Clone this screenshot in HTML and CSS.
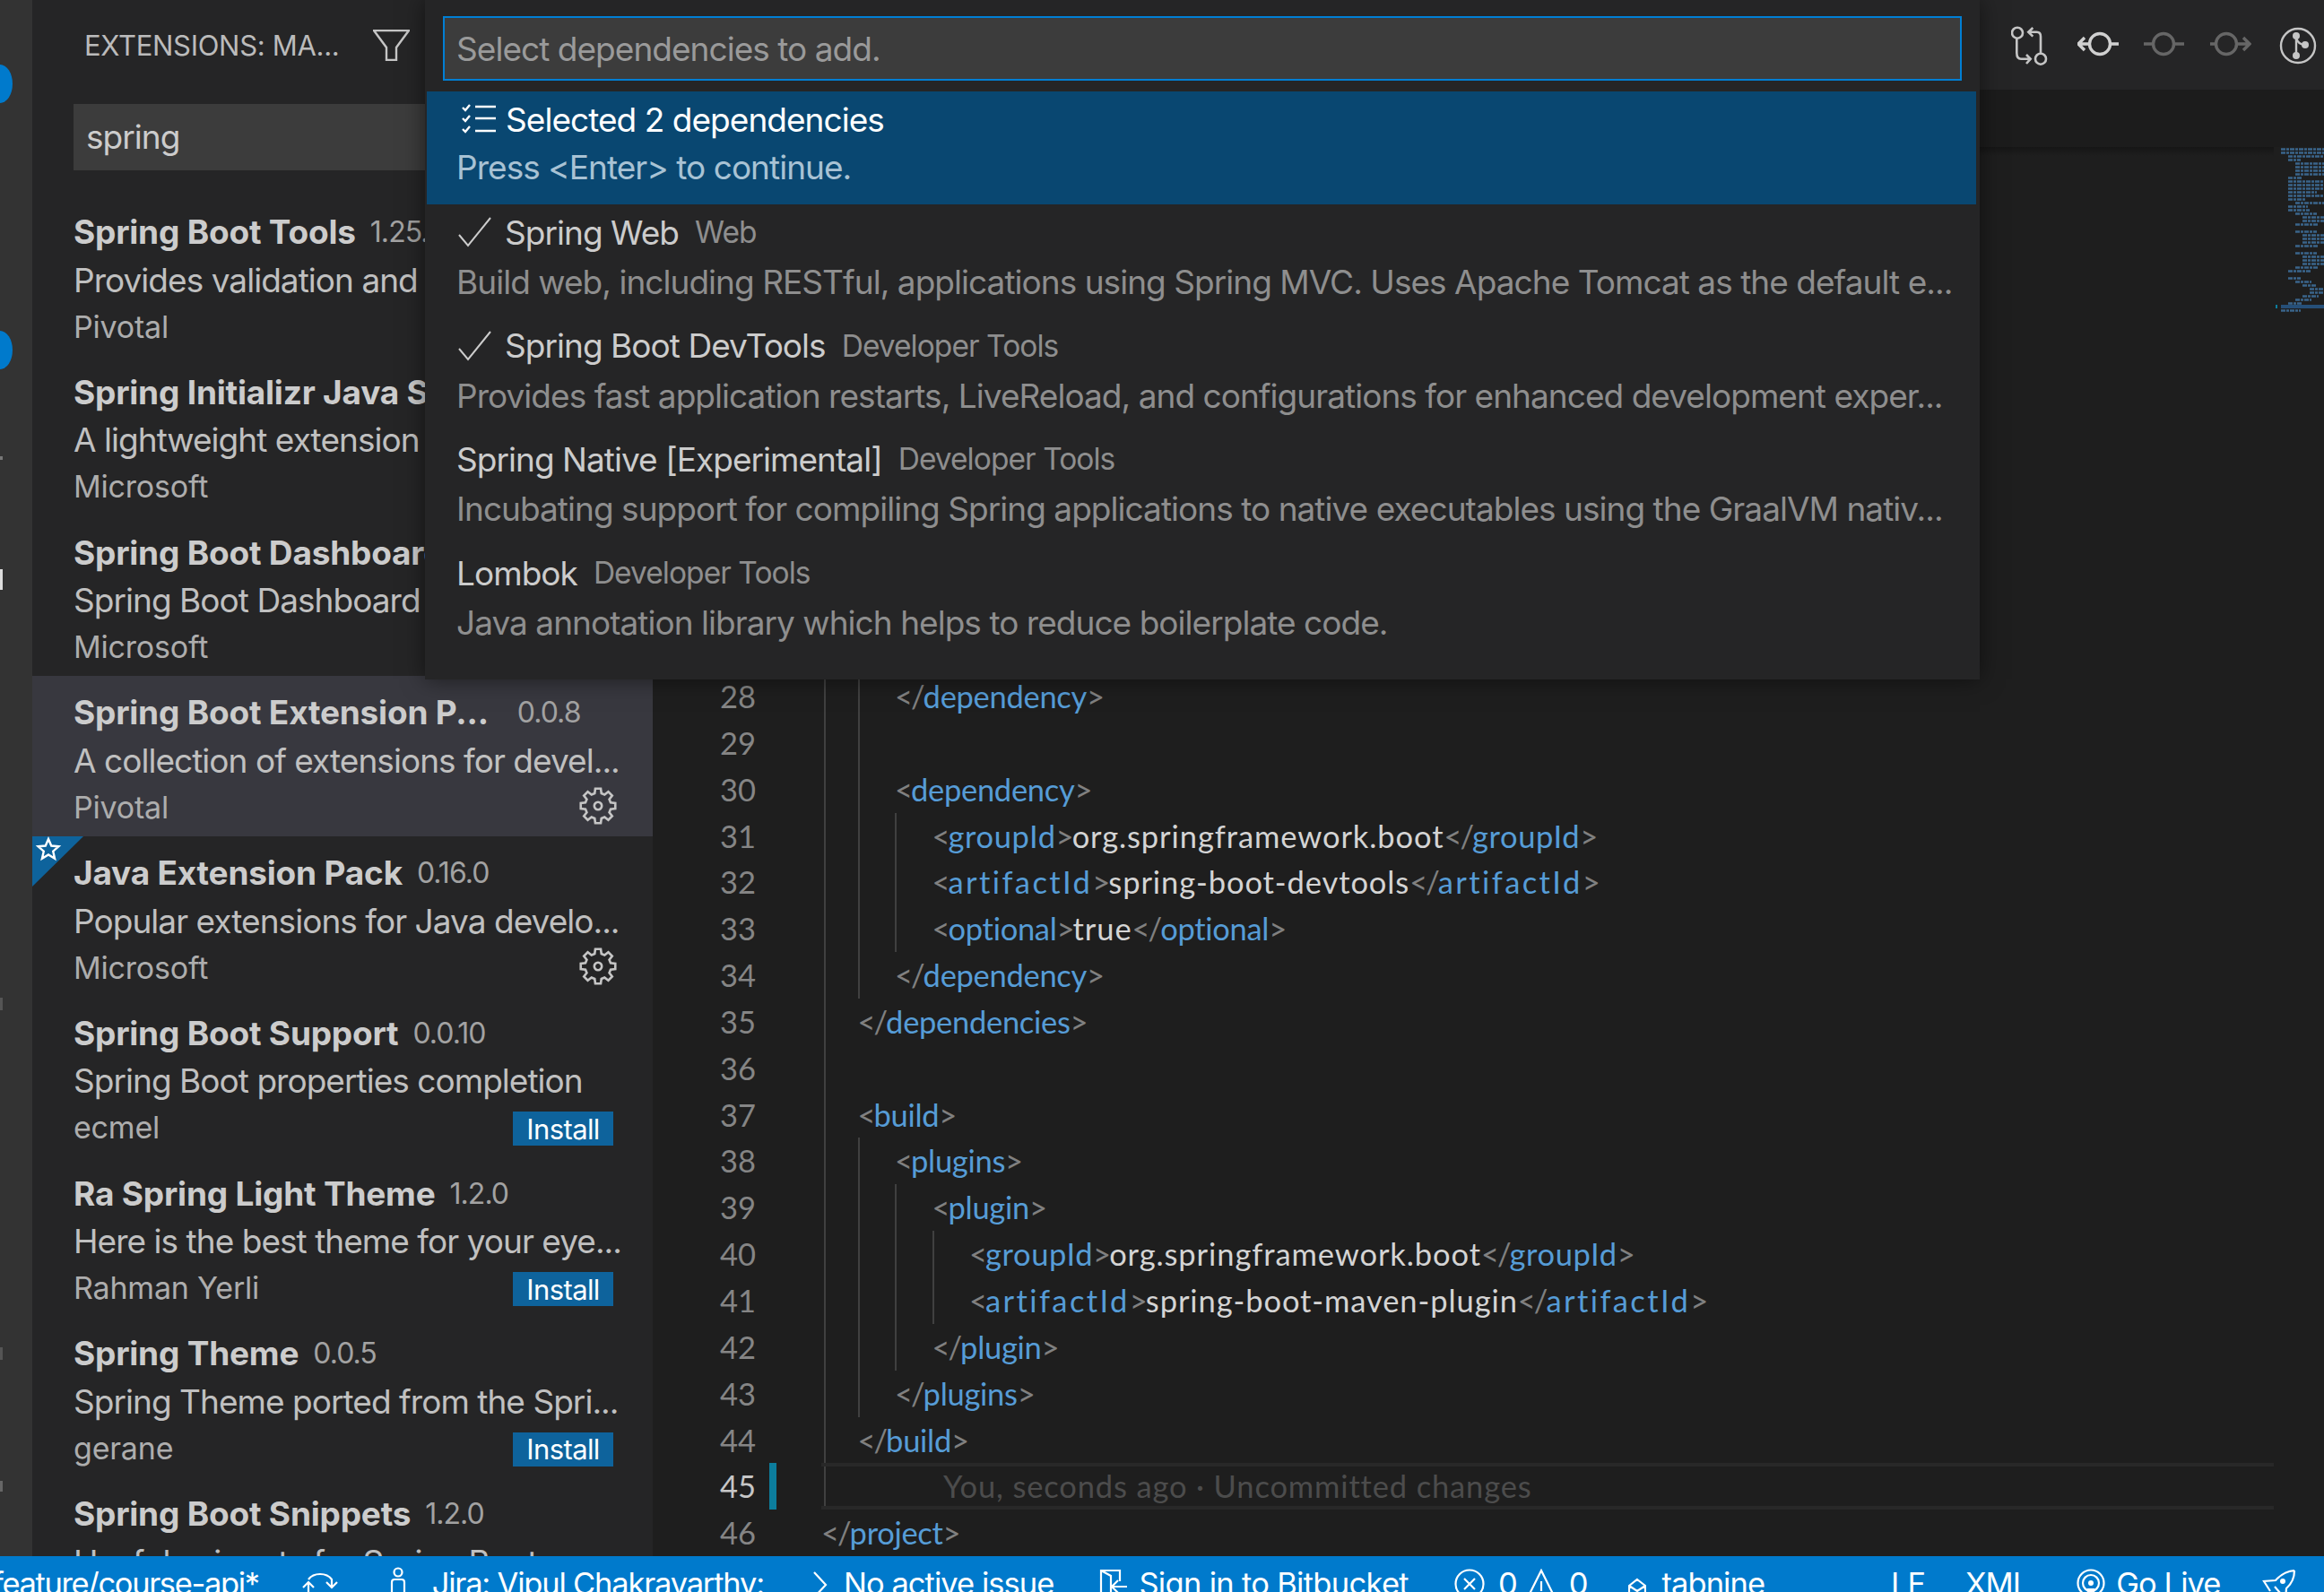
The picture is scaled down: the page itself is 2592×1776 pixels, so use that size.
FILE: index.html
```html
<!DOCTYPE html>
<html lang="en">
<head>
  <meta charset="UTF-8">
  <title>Spring Initializr - Select dependencies</title>
  <link rel="stylesheet" href="styles.css">
</head>
<body>

<svg class="defs" width="0" height="0">
  <symbol id="gear" viewBox="-21 -21 42 42">
    <polygon points="-3.75,-14.01 -3.05,-19.26 3.05,-19.26 3.75,-14.01 7.25,-12.56 11.46,-15.78 15.78,-11.46 12.56,-7.25 14.01,-3.75 19.26,-3.05 19.26,3.05 14.01,3.75 12.56,7.25 15.78,11.46 11.46,15.78 7.25,12.56 3.75,14.01 3.05,19.26 -3.05,19.26 -3.75,14.01 -7.25,12.56 -11.46,15.78 -15.78,11.46 -12.56,7.25 -14.01,3.75 -19.26,3.05 -19.26,-3.05 -14.01,-3.75 -12.56,-7.25 -15.78,-11.46 -11.46,-15.78 -7.25,-12.56" />
    <circle r="4.2" />
  </symbol>
</svg>

<div class="workbench">
  <div class="main">

    <!-- Activity bar, cropped at the left edge -->
    <div class="activity">
      <div class="badge badge-first"></div>
      <div class="badge badge-second"></div>
      <div class="mark mark-b"></div>
      <div class="mark mark-white"></div>
      <div class="mark mark-c"></div>
      <div class="mark mark-d"></div>
      <div class="mark mark-e"></div>
    </div>

    <!-- Extensions sidebar -->
    <div class="sidebar">
      <div class="sidebar-header">
        <span class="sidebar-title">EXTENSIONS: MA...</span>
        <svg class="filter-icon" viewBox="0 0 41 35"><path d="M1 1H40L26 20V34H15V20Z" /></svg>
      </div>
      <div class="search-box">spring</div>

      <div class="ext-list">
        <div class="ext">
          <div class="ext-head"><span class="ext-name">Spring Boot Tools</span><span class="ext-version">1.25.0</span></div>
          <div class="ext-desc">Provides validation and content assist</div>
          <div class="ext-foot"><span class="ext-publisher">Pivotal</span></div>
        </div>
        <div class="ext">
          <div class="ext-head"><span class="ext-name">Spring Initializr Java Support</span></div>
          <div class="ext-desc">A lightweight extension to quickly</div>
          <div class="ext-foot"><span class="ext-publisher">Microsoft</span></div>
        </div>
        <div class="ext">
          <div class="ext-head"><span class="ext-name">Spring Boot Dashboard</span></div>
          <div class="ext-desc">Spring Boot Dashboard for VS Code</div>
          <div class="ext-foot"><span class="ext-publisher">Microsoft</span></div>
        </div>
        <div class="ext ext-selected">
          <div class="ext-head"><span class="ext-name ext-cut">Spring Boot Extension P...</span><span class="ext-version">0.0.8</span></div>
          <div class="ext-desc">A collection of extensions for devel...</div>
          <div class="ext-foot">
            <span class="ext-publisher">Pivotal</span>
            <svg class="gear"><use href="#gear" /></svg>
          </div>
        </div>
        <div class="ext">
          <svg class="star-badge" viewBox="0 0 57 56">
            <polygon class="star-bg" points="0,0 57,0 0,56" />
            <polygon class="star" points="18,3 21.23,10.55 29.4,11.3 23.23,16.7 25.05,24.7 18,20.5 10.95,24.7 12.77,16.7 6.6,11.3 14.77,10.55" />
          </svg>
          <div class="ext-head"><span class="ext-name">Java Extension Pack</span><span class="ext-version">0.16.0</span></div>
          <div class="ext-desc">Popular extensions for Java develo...</div>
          <div class="ext-foot">
            <span class="ext-publisher">Microsoft</span>
            <svg class="gear"><use href="#gear" /></svg>
          </div>
        </div>
        <div class="ext">
          <div class="ext-head"><span class="ext-name">Spring Boot Support</span><span class="ext-version">0.0.10</span></div>
          <div class="ext-desc">Spring Boot properties completion</div>
          <div class="ext-foot"><span class="ext-publisher">ecmel</span><button class="install-btn">Install</button></div>
        </div>
        <div class="ext">
          <div class="ext-head"><span class="ext-name">Ra Spring Light Theme</span><span class="ext-version">1.2.0</span></div>
          <div class="ext-desc">Here is the best theme for your eye...</div>
          <div class="ext-foot"><span class="ext-publisher">Rahman Yerli</span><button class="install-btn">Install</button></div>
        </div>
        <div class="ext">
          <div class="ext-head"><span class="ext-name">Spring Theme</span><span class="ext-version">0.0.5</span></div>
          <div class="ext-desc">Spring Theme ported from the Spri...</div>
          <div class="ext-foot"><span class="ext-publisher">gerane</span><button class="install-btn">Install</button></div>
        </div>
        <div class="ext">
          <div class="ext-head"><span class="ext-name">Spring Boot Snippets</span><span class="ext-version">1.2.0</span></div>
          <div class="ext-desc">Useful snippets for Spring Boot pro...</div>
        </div>
      </div>
    </div>

    <!-- Editor -->
    <div class="editor">
      <div class="tabs">
        <svg class="action" viewBox="3 0 46 46">
          <circle cx="10" cy="9.7" r="6" /><circle cx="36" cy="38.7" r="6" />
          <path d="M9.3 16V32Q9.3 38.7 14 38.7H24M20 34l4.7 4.7L20 44M36 32V13.7Q36 8.7 31.7 8.7H22.3M27.3 4L22.3 8.7L27.3 13.7" />
        </svg>
        <svg class="action action-commit" viewBox="0 0 46 46">
          <circle cx="25" cy="22" r="11.5" />
          <path d="M36.5 22H46M13.5 22H1M8 15L1 22L8 29" />
        </svg>
        <svg class="action action-commit action-dim" viewBox="0 0 46 46">
          <circle cx="22" cy="22" r="11.5" />
          <path d="M33.5 22H45M10.5 22H0" />
        </svg>
        <svg class="action action-commit action-dim" viewBox="0 0 46 46">
          <circle cx="18" cy="22" r="11.5" />
          <path d="M29.5 22H44M6.5 22H0M37 15L44 22L37 29" />
        </svg>
        <svg class="action action-merge" viewBox="0 0 46 46">
          <circle cx="24" cy="24" r="19" />
          <circle class="dot" cx="22" cy="13" r="4" /><circle class="dot" cx="22" cy="35" r="4" /><circle class="dot" cx="32" cy="23" r="4" />
          <path d="M22 13V35M22 15Q24 23 32 23" />
        </svg>
      </div>
      <div class="breadcrumbs"></div>

      <div class="editor-body">
        <div class="gutter">
          <div>28</div><div>29</div><div>30</div><div>31</div><div>32</div><div>33</div><div>34</div>
          <div>35</div><div>36</div><div>37</div><div>38</div><div>39</div><div>40</div><div>41</div>
          <div>42</div><div>43</div><div>44</div><div class="current">45</div><div>46</div>
        </div>

        <div class="code">
          <div class="block block-root">
            <div class="block">
              <div class="line"><span class="br">&lt;/</span><span class="tag">dependency</span><span class="br">&gt;</span></div>
              <div class="line"></div>
              <div class="line"><span class="br">&lt;</span><span class="tag">dependency</span><span class="br">&gt;</span></div>
              <div class="block">
                <div class="line"><span class="br">&lt;</span><span class="tag tag-group">groupId</span><span class="br">&gt;</span>org.springframework.boot<span class="br">&lt;/</span><span class="tag tag-group">groupId</span><span class="br">&gt;</span></div>
                <div class="line"><span class="br">&lt;</span><span class="tag tag-wide">artifactId</span><span class="br">&gt;</span>spring-boot-devtools<span class="br">&lt;/</span><span class="tag tag-wide">artifactId</span><span class="br">&gt;</span></div>
                <div class="line"><span class="br">&lt;</span><span class="tag">optional</span><span class="br">&gt;</span>true<span class="br">&lt;/</span><span class="tag">optional</span><span class="br">&gt;</span></div>
              </div>
              <div class="line"><span class="br">&lt;/</span><span class="tag">dependency</span><span class="br">&gt;</span></div>
            </div>
            <div class="line"><span class="br">&lt;/</span><span class="tag">dependencies</span><span class="br">&gt;</span></div>
            <div class="line"></div>
            <div class="line"><span class="br">&lt;</span><span class="tag">build</span><span class="br">&gt;</span></div>
            <div class="block">
              <div class="line"><span class="br">&lt;</span><span class="tag">plugins</span><span class="br">&gt;</span></div>
              <div class="block">
                <div class="line"><span class="br">&lt;</span><span class="tag">plugin</span><span class="br">&gt;</span></div>
                <div class="block">
                  <div class="line"><span class="br">&lt;</span><span class="tag tag-group">groupId</span><span class="br">&gt;</span>org.springframework.boot<span class="br">&lt;/</span><span class="tag tag-group">groupId</span><span class="br">&gt;</span></div>
                  <div class="line"><span class="br">&lt;</span><span class="tag tag-wide">artifactId</span><span class="br">&gt;</span>spring-boot-maven-plugin<span class="br">&lt;/</span><span class="tag tag-wide">artifactId</span><span class="br">&gt;</span></div>
                </div>
                <div class="line"><span class="br">&lt;/</span><span class="tag">plugin</span><span class="br">&gt;</span></div>
              </div>
              <div class="line"><span class="br">&lt;/</span><span class="tag">plugins</span><span class="br">&gt;</span></div>
            </div>
            <div class="line"><span class="br">&lt;/</span><span class="tag">build</span><span class="br">&gt;</span></div>
            <div class="line line-current"><span class="blame">You, seconds ago · Uncommitted changes</span></div>
          </div>
          <div class="line"><span class="br">&lt;/</span><span class="tag">project</span><span class="br">&gt;</span></div>
        </div>

        <svg class="minimap" viewBox="0 0 56 190" width="56" height="190">
          <rect class="mini-current" x="8" y="176" width="48" height="4" />
          <rect class="mini-change" x="2" y="176" width="2" height="4" />
          <path class="mini-tags" d="M8 2.5h48M8 6.5h48M16 10.5h40M16 14.5h14M24 18.5h32M24 22.5h32M24 26.5h32M24 30.5h32M16 34.5h16M16 38.5h40M16 42.5h40M16 46.5h40M16 50.5h32M16 54.5h40M16 58.5h20M24 62.5h32M16 66.5h22M16 70.5h24M24 74.5h24M32 78.5h24M32 82.5h24M24 86.5h26M24 94.5h24M32 98.5h24M32 102.5h24M32 106.5h24M24 110.5h26M24 118.5h24M32 122.5h24M32 126.5h24M32 130.5h24M24 134.5h26M16 138.5h26M16 146.5h14M24 150.5h18M32 154.5h16M40 158.5h16M40 162.5h16M32 166.5h18M24 170.5h18M16 174.5h16M8 182.5h22" />
        </svg>
      </div>
    </div>
  </div>

  <!-- Status bar, cropped at the bottom -->
  <div class="statusbar">
    <span class="status-item status-branch">feature/course-api*</span>
    <svg class="status-icon status-sync" viewBox="0 0 40 34">
      <path d="M7 12A15 12 0 0 1 33 12V20M27 15L33 21L39 15M1 21L7 15L13 21M7 15V34M33 30V34" />
    </svg>
    <svg class="status-icon status-person" viewBox="0 0 18 34">
      <circle cx="9" cy="6" r="4.5" /><path d="M2 34V17Q2 14 5 14H13Q16 14 16 17V34" />
    </svg>
    <span class="status-item status-jira">Jira: Vipul Chakravarthy:</span>
    <svg class="status-icon status-chevron" viewBox="0 0 18 34"><path d="M2 4L15 18L2 32" /></svg>
    <span class="status-item status-issue">No active issue</span>
    <svg class="status-icon status-signin" viewBox="0 0 34 34">
      <path d="M3 34V2H24V14M3 2L14 8V34M32 20H15M22 13L15 20L22 27" />
    </svg>
    <span class="status-item status-bitbucket">Sign in to Bitbucket</span>
    <svg class="status-icon status-error" viewBox="0 0 34 34">
      <circle cx="17" cy="17" r="15.5" /><path d="M11 11L23 23M23 11L11 23" />
    </svg>
    <span class="status-item status-count">0</span>
    <svg class="status-icon status-warn" viewBox="0 0 36 34">
      <path d="M18 2L35 36H1ZM18 14V25M18 28V31" />
    </svg>
    <span class="status-item status-count status-count-last">0</span>
    <svg class="status-icon status-tabnine" viewBox="0 0 20 30">
      <path d="M10 2L19 9V32H1V9ZM1 9L10 15L19 9M10 15V32" />
    </svg>
    <span class="status-item status-tab">tabnine</span>
    <span class="status-item status-lf">LF</span>
    <span class="status-item status-xml">XML</span>
    <svg class="status-icon status-live" viewBox="0 0 32 34">
      <circle cx="16" cy="16" r="14.5" /><circle cx="16" cy="16" r="9" /><circle class="dot" cx="16" cy="16" r="3" /><path d="M13 34V23H19V34" />
    </svg>
    <span class="status-item status-golive">Go Live</span>
    <svg class="status-icon status-rocket" viewBox="0 0 38 34">
      <path d="M36 2Q24 3 15 13L2 14L9 25M36 2Q36 14 27 22L26 34M14 20L20 27" /><circle class="dot" cx="23" cy="14" r="3" />
    </svg>
  </div>

  <!-- Quick pick over the workbench -->
  <div class="quick-pick">
    <div class="qp-input">Select dependencies to add.</div>
    <div class="qp-list">
      <div class="qp-row qp-row-active">
        <div class="qp-title">
          <svg class="qp-icon qp-checklist" viewBox="0 0 38 34">
            <path class="qp-icon-lines" d="M15 3H38M15 16H38M15 30H38" />
            <path d="M1 4L4 7L9 1M1 16L4 19L9 13M1 28L4 31L9 25" />
          </svg>
          <span class="qp-label">Selected 2 dependencies</span>
        </div>
        <div class="qp-detail">Press &lt;Enter&gt; to continue.</div>
      </div>
      <div class="qp-row">
        <div class="qp-title">
          <svg class="qp-icon qp-check" viewBox="0 0 40 34"><path d="M3 20L13 32L38 1" /></svg>
          <span class="qp-label">Spring Web</span><span class="qp-tag">Web</span>
        </div>
        <div class="qp-detail">Build web, including RESTful, applications using Spring MVC. Uses Apache Tomcat as the default e...</div>
      </div>
      <div class="qp-row">
        <div class="qp-title">
          <svg class="qp-icon qp-check" viewBox="0 0 40 34"><path d="M3 20L13 32L38 1" /></svg>
          <span class="qp-label">Spring Boot DevTools</span><span class="qp-tag">Developer Tools</span>
        </div>
        <div class="qp-detail">Provides fast application restarts, LiveReload, and configurations for enhanced development exper...</div>
      </div>
      <div class="qp-row">
        <div class="qp-title">
          <span class="qp-label">Spring Native [Experimental]</span><span class="qp-tag">Developer Tools</span>
        </div>
        <div class="qp-detail">Incubating support for compiling Spring applications to native executables using the GraalVM nativ...</div>
      </div>
      <div class="qp-row">
        <div class="qp-title">
          <span class="qp-label">Lombok</span><span class="qp-tag">Developer Tools</span>
        </div>
        <div class="qp-detail">Java annotation library which helps to reduce boilerplate code.</div>
      </div>
    </div>
  </div>
</div>

</body>
</html>
```

FILE: styles.css
```css
* { margin: 0; padding: 0; box-sizing: border-box; }
html, body { width: 2592px; height: 1776px; overflow: hidden; background: #1e1e1e; }
body { font-family: Inter, 'Noto Sans', sans-serif; color: #ccc; letter-spacing: -0.96px; }

.defs { position: absolute; }

.workbench { position: relative; width: 2592px; height: 1776px; display: flex; flex-direction: column; }
.main { display: flex; height: 1736px; overflow: hidden; }

/* Activity bar */
.activity { width: 36px; flex: none; background: #333; display: flex; flex-direction: column; align-items: flex-start; overflow: hidden; }
.badge { width: 28px; height: 43px; margin-left: -14px; border-radius: 50%; background: #007acc; flex: none; }
.badge-first { margin-top: 72px; }
.badge-second { margin-top: 254px; }
.mark { flex: none; width: 3px; height: 4px; background: #777; }
.mark-b { margin-top: 97px; }
.mark-white { margin-top: 122px; height: 23px; background: #ddd; }
.mark-c { margin-top: 455px; height: 14px; background: #555; }
.mark-d { margin-top: 376px; height: 14px; background: #555; }
.mark-e { margin-top: 135px; height: 12px; background: #666; }

/* Sidebar */
.sidebar { width: 692px; flex: none; background: #252526; overflow: hidden; }
.sidebar-header { height: 100px; padding-left: 58px; display: flex; align-items: center; }
.sidebar-title { font-size: 31px; letter-spacing: -0.3px; color: #bbb; width: 322px; }
.filter-icon { width: 41px; height: 35px; fill: none; stroke: #c5c5c5; stroke-width: 2.4; }
.search-box { height: 74px; margin: 16px 0 28px 46px; background: #3c3c3c; padding-left: 14px; font-size: 37px; line-height: 74px; color: #ccc; }

.ext-list { display: flex; flex-direction: column; }
.ext { position: relative; height: 178.75px; padding: 14.5px 40px 0 46px; flex: none; }
.ext-selected { background: #38383f; }
.ext-head { display: flex; align-items: center; height: 52px; white-space: nowrap; }
.ext-name { font-size: 37px; font-weight: 700; letter-spacing: -0.2px; color: #ccc; }
.ext-cut { padding-right: 16px; }
.ext-version { font-size: 32px; color: #a2a2a2; margin-left: 16px; }
.ext-desc { font-size: 37px; line-height: 56px; color: #c0c0c0; white-space: nowrap; }
.ext-foot { display: flex; justify-content: space-between; align-items: flex-start; height: 48px; }
.ext-publisher { font-size: 34px; letter-spacing: -0.2px; line-height: 48px; color: #adadad; }
.gear { width: 42px; height: 42px; margin-top: 1px; fill: none; stroke: #c5c5c5; stroke-width: 2.6; }
.install-btn { width: 112px; height: 38px; margin: 6px 4px 0 0; border: none; background: #0e639c; color: #fff; font-family: inherit; font-size: 31px; letter-spacing: -0.6px; }
.star-badge { position: absolute; left: 0; top: 0; width: 57px; height: 56px; }
.star-bg { fill: #0e639c; }
.star { fill: none; stroke: #fff; stroke-width: 2.4; }

/* Editor */
.editor { flex: 1; display: flex; flex-direction: column; min-width: 0; }
.tabs { height: 100px; flex: none; background: #252526; display: flex; justify-content: flex-end; align-items: center; gap: 28px; padding-right: 7px; }
.action { width: 46px; height: 46px; flex: none; fill: none; stroke: #c5c5c5; stroke-width: 2.6; }
.action-commit { stroke: #d0d0d0; stroke-width: 3.4; }
.action-dim { stroke: #666; }
.action-merge { stroke-width: 2.4; }
.action .dot { fill: #c5c5c5; stroke: none; }
.breadcrumbs { height: 64px; flex: none; background: #1c1c1c; }

.editor-body { flex: 1; display: flex; padding-top: 587px; background: linear-gradient(#161616, #1e1e1e 10px) no-repeat; }
.gutter { width: 115px; flex: none; text-align: right; font-family: Lato, sans-serif; font-size: 34.5px; letter-spacing: 0; line-height: 51.85px; color: #858585; }
.gutter .current { position: relative; color: #c6c6c6; }
.gutter .current::after { content: ""; position: absolute; right: -23px; top: 0; width: 8px; height: 100%; background: #0c7d9d; }

.code { flex: 1; min-width: 0; margin-left: 73px; font-family: Lato, sans-serif; font-size: 34.5px; letter-spacing: 0.9px; line-height: 51.85px; color: #d4d4d4; white-space: nowrap; }
.block { border-left: 2px solid #404040; padding-left: 39.5px; }
.block-root { margin-left: 3px; padding-left: 35.5px; }
.line { height: 51.85px; }
.line-current { margin-left: -40.5px; padding-left: 136px; border-top: 4px solid #282828; border-bottom: 4px solid #282828; line-height: 44px; }
.br { color: #808080; letter-spacing: -2px; }
.tag { color: #569cd6; letter-spacing: -0.3px; }
.tag-group { letter-spacing: 0.6px; }
.tag-wide { letter-spacing: 2.4px; }
.blame { color: #4c4c4c; letter-spacing: 0.85px; }

.minimap { width: 56px; flex: none; background: #1e1e1e; margin-top: -587px; height: 190px; }
.mini-tags { fill: none; stroke: #3a648a; stroke-width: 2.6; stroke-dasharray: 5 1 3 1; }
.mini-current { fill: #264f78; }
.mini-change { fill: #0c7d9d; }

/* Status bar */
.statusbar { height: 40px; flex: none; background: #007acc; color: #fff; display: flex; overflow: hidden; }
.status-item { font-size: 34.5px; line-height: 62px; height: 62px; white-space: nowrap; flex: none; }
.status-icon { flex: none; height: 34px; margin-top: 14px; fill: none; stroke: #fff; stroke-width: 2.2; }
.status-icon .dot { fill: #fff; stroke: none; }
.status-branch { margin-left: -8px; letter-spacing: -1.35px; }
.status-sync { width: 40px; margin-left: 48px; }
.status-person { width: 18px; margin-left: 58px; margin-top: 12px; }
.status-jira { margin-left: 29px; letter-spacing: -1.2px; }
.status-chevron { width: 18px; margin-left: 54px; }
.status-issue { margin-left: 17px; }
.status-signin { width: 34px; margin-left: 50px; }
.status-bitbucket { margin-left: 11px; letter-spacing: -0.7px; }
.status-error { width: 34px; margin-left: 51px; }
.status-count { margin-left: 15px; }
.status-warn { width: 36px; margin-left: 9px; }
.status-count-last { margin-left: 13px; }
.status-tabnine { width: 20px; margin-left: 45px; margin-top: 22px; }
.status-tab { margin-left: 18px; }
.status-lf { margin-left: 141px; }
.status-xml { margin-left: 45px; }
.status-live { width: 32px; margin-left: 53px; }
.status-golive { margin-left: 12px; }
.status-rocket { width: 38px; margin-left: 47px; }

/* Quick pick */
.quick-pick { position: absolute; left: 474px; top: 0; width: 1734px; height: 758px; padding-top: 18px; background: #252526; box-shadow: 0 0 24px rgba(0,0,0,0.5); }
.qp-input { height: 72px; margin: 0 20px; background: #3c3c3c; border: 2px solid #007fd4; padding-left: 13px; font-size: 37px; line-height: 70px; color: #9a9a9a; }
.qp-list { margin: 12px 4px 0 2px; }
.qp-row { height: 126.7px; padding: 3px 0 0 33px; }
.qp-row-active { background: #094771; height: 126px; }
.qp-title { display: flex; align-items: center; height: 56px; white-space: nowrap; }
.qp-icon { width: 40px; height: 34px; margin: 0 14px 0 0; flex: none; fill: none; stroke: #fff; stroke-width: 2.4; }
.qp-check { stroke: #ccc; stroke-width: 2; }
.qp-checklist { width: 38px; margin: 0 11px 0 6px; }
.qp-icon-lines { stroke-width: 2.6; }
.qp-label { font-size: 37px; color: #ccc; }
.qp-row-active .qp-label { color: #fff; }
.qp-tag { font-size: 33.5px; color: #8e8e8e; margin-left: 18px; }
.qp-detail { font-size: 37px; line-height: 56px; color: #8e8e8e; white-space: nowrap; }
.qp-row-active .qp-detail { color: #a8c2d4; line-height: 52px; }
```
